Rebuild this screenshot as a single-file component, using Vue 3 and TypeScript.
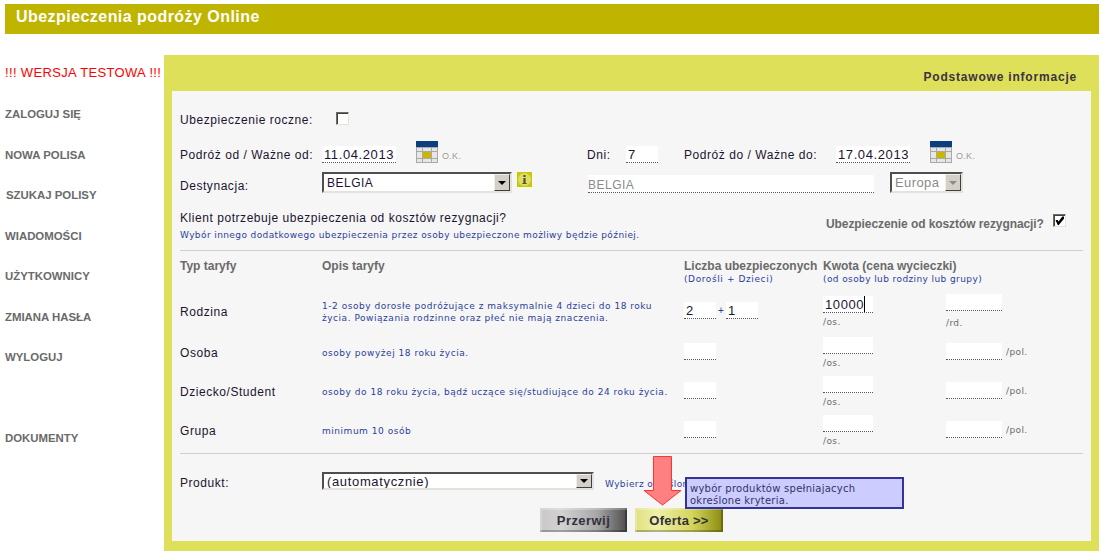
<script setup lang="ts">
const menu = [
  { label: 'ZALOGUJ SIĘ' },
  { label: 'NOWA POLISA' },
  { label: 'SZUKAJ POLISY', nudge: true },
  { label: 'WIADOMOŚCI' },
  { label: 'UŻYTKOWNICY' },
  { label: 'ZMIANA HASŁA' },
  { label: 'WYLOGUJ' }
]

const tariffs = [
  {
    name: 'Rodzina',
    desc: '1-2 osoby dorosłe podróżujące z maksymalnie 4 dzieci do 18 roku życia. Powiązania rodzinne oraz płeć nie mają znaczenia.',
    family: true
  },
  { name: 'Osoba', desc: 'osoby powyżej 18 roku życia.', family: false },
  {
    name: 'Dziecko/Student',
    desc: 'osoby do 18 roku życia, bądź uczące się/studiujące do 24 roku życia.',
    family: false
  },
  { name: 'Grupa', desc: 'minimum 10 osób', family: false }
]

// 3x3 calendar grid, the middle cell is the highlighted day
const calendarCells = [
  { x: 1, w: 5 },
  { x: 7, w: 8 },
  { x: 16, w: 5 }
].flatMap((col, c) =>
  [
    { y: 7, h: 3 },
    { y: 11, h: 6 },
    { y: 18, h: 3 }
  ].map((row, r) => ({ ...col, ...row, id: `${c}-${r}`, today: c === 1 && r === 1 }))
)
</script>

<template>
  <div class="page">
    <header class="topbar">Ubezpieczenia podróży Online</header>

    <div class="main">
      <nav class="side">
        <div class="test-note">!!! WERSJA TESTOWA !!!</div>
        <a v-for="item in menu" :key="item.label" class="side-link" :class="{ nudge: item.nudge }">{{ item.label }}</a>
        <a class="side-link docs">DOKUMENTY</a>
      </nav>

      <section class="panel">
        <h2 class="panel-title">Podstawowe informacje</h2>

        <form class="form" @submit.prevent>
          <div class="row row-annual">
            <label class="label">Ubezpieczenie roczne:</label>
            <input type="checkbox" class="check" />
          </div>

          <div class="row row-dates">
            <label class="label">Podróż od / Ważne od:</label>
            <input class="field date" value="11.04.2013" />
            <svg class="cal" width="22" height="22" viewBox="0 0 22 22">
              <rect width="22" height="22" fill="#a9a9a9" />
              <rect width="22" height="6" fill="#0c3f80" />
              <rect
                v-for="c in calendarCells"
                :key="c.id"
                :x="c.x"
                :y="c.y"
                :width="c.w"
                :height="c.h"
                :fill="c.today ? '#c9b800' : '#e6e6e6'"
              />
            </svg>
            <span class="ok">O.K.</span>
            <label class="label days-label">Dni:</label>
            <input class="field days" value="7" />
            <label class="label to-label">Podróż do / Ważne do:</label>
            <input class="field date" value="17.04.2013" />
            <svg class="cal" width="22" height="22" viewBox="0 0 22 22">
              <rect width="22" height="22" fill="#a9a9a9" />
              <rect width="22" height="6" fill="#0c3f80" />
              <rect
                v-for="c in calendarCells"
                :key="c.id"
                :x="c.x"
                :y="c.y"
                :width="c.w"
                :height="c.h"
                :fill="c.today ? '#c9b800' : '#e6e6e6'"
              />
            </svg>
            <span class="ok">O.K.</span>
          </div>

          <div class="row row-dest">
            <label class="label dest-label">Destynacja:</label>
            <div class="select dest-select">
              <select><option>BELGIA</option></select>
              <span class="arrow"><i></i></span>
            </div>
            <svg class="info" width="15" height="15" viewBox="0 0 15 15">
              <rect width="15" height="15" fill="#c9c800" />
              <circle cx="7.5" cy="7.5" r="6.5" fill="#dcdc6a" />
              <rect x="6.4" y="3" width="2.2" height="2" fill="#55551a" />
              <rect x="6.4" y="6" width="2.2" height="5" fill="#55551a" />
              <rect x="5.4" y="11" width="4.2" height="1" fill="#55551a" />
            </svg>
            <input class="field dest-name" value="BELGIA" readonly />
            <div class="select region-select">
              <select disabled><option>Europa</option></select>
              <span class="arrow off"><i></i></span>
            </div>
          </div>

          <div class="row row-cancel">
            <div class="cancel-text">
              <div class="label cancel-q">Klient potrzebuje ubezpieczenia od kosztów rezygnacji?</div>
              <div class="hint cancel-hint">Wybór innego dodatkowego ubezpieczenia przez osoby ubezpieczone możliwy będzie później.</div>
            </div>
            <span class="cancel-label">Ubezpieczenie od kosztów rezygnacji?</span>
            <input type="checkbox" class="check cancel-check" checked />
          </div>

          <hr class="rule" />

          <div class="tariff-head">
            <div class="th">Typ taryfy</div>
            <div class="th">Opis taryfy</div>
            <div class="th">Liczba ubezpieczonych<small class="hint count-hint">(Dorośli + Dzieci)</small></div>
            <div class="th">Kwota (cena wycieczki)<small class="hint">(od osoby lub rodziny lub grupy)</small></div>
          </div>

          <div v-for="t in tariffs" :key="t.name" class="tariff" :class="{ family: t.family }">
            <div class="label">{{ t.name }}</div>
            <div class="hint desc">{{ t.desc }}</div>
            <div class="count">
              <input class="field small" :value="t.family ? '2' : ''" />
              <template v-if="t.family">
                <span class="plus">+</span>
                <input class="field small" value="1" />
              </template>
            </div>
            <div class="amount">
              <input class="field price" :value="t.family ? '10000' : ''" />
              <span v-if="t.family" class="caret"></span>
              <span class="unit">/os.</span>
            </div>
            <div class="extra" :class="{ stacked: t.family }">
              <input class="field extra-input" />
              <span class="unit">{{ t.family ? '/rd.' : '/pol.' }}</span>
            </div>
          </div>

          <hr class="rule rule-bottom" />

          <div class="row row-product">
            <label class="label">Produkt:</label>
            <div class="select product-select">
              <select><option>(automatycznie)</option></select>
              <span class="arrow"><i></i></span>
            </div>
            <span class="hint pick">Wybierz określone</span>
          </div>

          <div class="actions">
            <button type="button" class="btn cancel">Przerwij</button>
            <button type="button" class="btn offer">Oferta &gt;&gt;</button>
          </div>

          <svg class="pointer" width="39" height="50" viewBox="0 0 39 50">
            <path d="M10.5 .5H28.5V34.5H38L19.5 49 1 34.5H10.5Z" fill="#ff8080" stroke="#f33" />
          </svg>
          <div class="tip">wybór produktów spełniajacych określone kryteria.</div>
        </form>
      </section>
    </div>
  </div>
</template>

<style scoped>
.page {
  width: 1103px;
  height: 559px;
  padding: 4px 4px 0 5px;
  box-sizing: border-box;
  overflow: hidden;
  font-family: "Liberation Sans", Arial, sans-serif;
  color: #1c1430;
}

.topbar {
  height: 30px;
  padding: 4px 0 0 11px;
  box-sizing: border-box;
  background: #bfb500;
  color: #fff;
  font-size: 16px;
  font-weight: bold;
  letter-spacing: 0.45px;
}

.main {
  display: flex;
  margin-top: 21px;
}

.side {
  width: 159px;
  flex: none;
  display: flex;
  flex-direction: column;
  font-size: 11.4px;
  font-weight: bold;
  color: #6a6a6a;
}

.test-note {
  margin-top: 10px;
  height: 37px;
  font-size: 13px;
  font-weight: normal;
  letter-spacing: 0.35px;
  color: #f00;
  white-space: nowrap;
}

.side-link {
  display: block;
  height: 40.5px;
  line-height: 17px;
  padding-top: 4px;
  box-sizing: border-box;
}

.nudge {
  padding-left: 1px;
}

.docs {
  margin-top: 40px;
}

.panel {
  width: 935px;
  height: 496px;
  padding: 0 8px 10px;
  box-sizing: border-box;
  display: flex;
  flex-direction: column;
  background: #dfe05a;
}

.panel-title {
  height: 36px;
  margin: 0;
  padding: 15px 14px 0 0;
  box-sizing: border-box;
  text-align: right;
  font-size: 12px;
  font-weight: bold;
  letter-spacing: 0.8px;
  color: #3c3340;
}

.form {
  position: relative;
  flex: 1;
  padding: 0 8px;
  background: #f6f6f6;
}

.row {
  display: flex;
}

.label {
  font-size: 12px;
  letter-spacing: 0.55px;
  line-height: 18px;
  white-space: nowrap;
}

.hint {
  display: block;
  font-family: "DejaVu Sans", Verdana, sans-serif;
  font-size: 9px;
  letter-spacing: 0.4px;
  color: #2b3f9c;
}

.field {
  display: block;
  height: 17px;
  padding: 0 2px;
  box-sizing: border-box;
  border: 0;
  border-bottom: 1px dotted #555;
  background: #fff;
  outline: 0;
  border-radius: 0;
  font-family: "Liberation Sans", Arial, sans-serif;
  font-size: 13px;
  letter-spacing: 0.6px;
  color: #1c1430;
}

.check {
  appearance: none;
  width: 13px;
  height: 13px;
  margin: 0;
  position: relative;
  flex: none;
  box-sizing: border-box;
  border: 1px solid;
  border-color: #6f6c64 #e4e2da #e4e2da #6f6c64;
  box-shadow: inset 1px 1px 0 #3f3f3f;
  background: #fff;
}

.check:checked::after {
  content: "";
  position: absolute;
  inset: 1px;
  background: #000;
  clip-path: polygon(5% 45%, 30% 45%, 40% 62%, 80% 5%, 100% 5%, 100% 30%, 42% 100%, 30% 100%);
}

.row-annual {
  height: 30px;
  padding-top: 20px;
  box-sizing: content-box;
}

.row-annual .label {
  width: 156px;
}

.row-annual .check {
  margin-top: 1px;
}

.row-dates {
  height: 31px;
  align-items: flex-start;
}

.row-dates .label {
  margin-top: 5px;
}

.row-dates > .label:first-child {
  width: 142px;
}

.row-dates .field {
  margin-top: 5px;
}

.date {
  width: 74px;
}

.cal {
  margin-left: 20px;
  flex: none;
}

.ok {
  margin: 10px 0 0 4px;
  width: 0;
  font-size: 9px;
  letter-spacing: 0.3px;
  color: #9a9a9a;
}

.days-label {
  margin-left: 145px;
  width: 39px;
}

.days {
  width: 32px;
}

.to-label {
  margin-left: 26px;
  width: 152px;
}

.row-dest {
  height: 33px;
  align-items: flex-start;
}

.dest-label {
  width: 142px;
  margin-top: 5px;
}

.select {
  display: flex;
  height: 21px;
  box-sizing: border-box;
  border: 2px solid;
  border-color: #4f4f4f #e4e2da #e4e2da #4f4f4f;
  background: #fff;
}

.select select {
  flex: 1;
  min-width: 0;
  appearance: none;
  border: 0;
  outline: 0;
  padding: 0 3px;
  background: transparent;
  font-family: "Liberation Sans", Arial, sans-serif;
  font-size: 12px;
  letter-spacing: 0.5px;
  color: #1c1430;
  opacity: 1;
}

.select select:disabled {
  color: #8a8a8a;
  font-size: 13px;
  letter-spacing: 0.4px;
}

.arrow {
  flex: none;
  width: 16px;
  display: flex;
  align-items: center;
  justify-content: center;
  border: 1px solid;
  border-color: #f0eee8 #404040 #404040 #f0eee8;
  box-sizing: border-box;
  background: #d4d0c8;
}

.arrow i {
  width: 0;
  height: 0;
  border: 4px solid transparent;
  border-top: 4px solid #000;
  border-bottom: 0;
}

.arrow.off i {
  border-top-color: #8a8a8a;
}

.dest-select {
  width: 190px;
}

.info {
  margin-left: 5px;
  flex: none;
}

.dest-name {
  width: 286px;
  height: 18px;
  margin: 3px 0 0 56px;
  padding: 2px 0 0;
  font-size: 12px;
  letter-spacing: 0.5px;
  color: #8a8a8a;
}

.region-select {
  width: 73px;
  margin-left: 16px;
}

.row-cancel {
  height: 45px;
  align-items: flex-start;
}

.cancel-text {
  width: 646px;
  padding-top: 4px;
}

.cancel-hint {
  margin-top: 3px;
}

.cancel-label {
  width: 227px;
  padding-top: 12px;
  font-size: 12px;
  font-weight: bold;
  letter-spacing: -0.08px;
  color: #6a6a6a;
  white-space: nowrap;
}

.cancel-check {
  margin-top: 9px;
}

.rule {
  height: 1px;
  margin: 0;
  border: 0;
  background: #cfcfcf;
}

.tariff-head,
.tariff {
  display: grid;
  grid-template-columns: 142px 362px 139px 123px 1fr;
}

.tariff-head {
  height: 44px;
  padding-top: 8px;
  box-sizing: border-box;
}

.th {
  font-size: 12px;
  font-weight: bold;
  color: #6a6a6a;
  white-space: nowrap;
  line-height: 14px;
}

.th small {
  font-weight: normal;
  line-height: 13px;
}

.th .count-hint {
  letter-spacing: 0.6px;
}

.tariff {
  height: 39px;
  align-items: start;
}

.tariff.family {
  height: 44px;
}

.tariff .label {
  padding-top: 5px;
}

.tariff.family .label {
  padding-top: 8px;
}

.desc {
  padding-top: 8px;
  line-height: 12px;
  letter-spacing: 0.53px;
}

.tariff.family .desc {
  padding-top: 5px;
}

.count {
  display: flex;
  padding-top: 4px;
}

.tariff.family .count {
  padding-top: 7px;
}

.small {
  width: 32px;
}

.plus {
  width: 10px;
  font-size: 10px;
  line-height: 17px;
  text-align: center;
  color: #2b3f9c;
}

.price {
  width: 50px;
}

.amount {
  position: relative;
  margin-top: -2px;
}

.amount .unit {
  display: block;
  margin-top: 4px;
}

.tariff.family .amount {
  margin-top: 1px;
}

.caret {
  position: absolute;
  left: 41px;
  top: 0;
  width: 1px;
  height: 16px;
  background: #000;
}

.unit {
  font-family: "DejaVu Sans", Verdana, sans-serif;
  font-size: 9px;
  letter-spacing: 0.4px;
  color: #6a6a6a;
}

.extra {
  display: flex;
  align-items: center;
  padding-top: 4px;
  gap: 4px;
}

.tariff.family .extra {
  padding-top: 0;
  margin-top: -1px;
}

.stacked {
  flex-direction: column;
  align-items: flex-start;
  gap: 7px;
}

.extra-input {
  width: 56px;
}

.rule-bottom {
  margin-top: -3px;
}

.row-product {
  height: 36px;
  padding-top: 18px;
  box-sizing: content-box;
  align-items: flex-start;
}

.row-product .label {
  width: 142px;
  padding-top: 2px;
}

.product-select {
  width: 272px;
  height: 18px;
}

.product-select select {
  padding: 0 3px;
  font-size: 13px;
  letter-spacing: 0.65px;
}

.pick {
  margin-left: 11px;
  padding-top: 7px;
  white-space: nowrap;
}

.actions {
  display: flex;
  gap: 8px;
  padding-left: 360px;
}

.btn {
  width: 87px;
  height: 24px;
  padding: 0;
  border: 0;
  font-family: "Liberation Sans", Arial, sans-serif;
  font-size: 13px;
  font-weight: bold;
  letter-spacing: 0.45px;
  color: #33303c;
  box-shadow: inset 2px 2px 0 rgba(255, 255, 255, 0.25), inset -2px -2px 0 rgba(0, 0, 0, 0.25);
}

.cancel {
  background: linear-gradient(90deg, #c9c9c9 0%, #d2d2d2 25%, #a8a8a8 65%, #4e4e4e 100%);
}

.offer {
  width: 88px;
  letter-spacing: 0.25px;
  background: linear-gradient(90deg, #e0e080 0%, #eef0a8 25%, #d4d55c 65%, #8a8a10 100%);
}

.pointer {
  position: absolute;
  left: 471px;
  top: 365px;
}

.tip {
  position: absolute;
  left: 513px;
  top: 386px;
  width: 219px;
  height: 32px;
  padding: 4px 3px 0;
  box-sizing: border-box;
  border: 2px solid #333399;
  background: #ccccff;
  font-family: "DejaVu Sans", Verdana, sans-serif;
  font-size: 10px;
  letter-spacing: 0.25px;
  line-height: 12px;
  color: #333366;
}
</style>
